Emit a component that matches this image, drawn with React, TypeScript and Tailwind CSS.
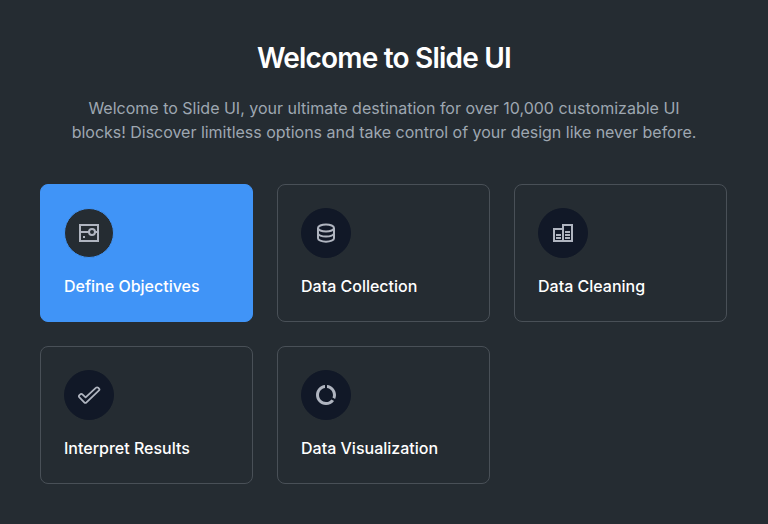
import type { ReactNode } from "react";

type Step = { title: string; icon: ReactNode; active?: boolean };

const steps: Step[] = [
  {
    title: "Define Objectives",
    active: true,
    icon: (
      <>
        <rect x="3" y="4" width="18" height="16" />
        <path d="M3 11h9M18 11h3" />
        <circle cx="15" cy="11" r="3" />
        <path d="M6 16h2" />
      </>
    ),
  },
  {
    title: "Data Collection",
    icon: (
      <>
        <ellipse cx="12" cy="7" rx="8" ry="3.5" />
        <path d="M4 7v5.2c0 1.9 3.6 3.4 8 3.4s8-1.5 8-3.4V7M4 12v5.2c0 2 3.6 3.5 8 3.5s8-1.5 8-3.5V12" />
      </>
    ),
  },
  {
    title: "Data Cleaning",
    icon: (
      <>
        <path d="M3 8h9V20H3zM12 20V4h9v16h-9" />
        <path d="M5 14h5M5 17h5M14 11h5M14 14h5M14 17h5" />
      </>
    ),
  },
  {
    title: "Interpret Results",
    icon: (
      <path
        d="M8.6 14.3 5.4 11.4a1.5 1.5 0 0 0-2.2 0l-1 1a1.2 1.2 0 0 0 0 1.7l5.3 5.5a1.2 1.2 0 0 0 1.7 0L22 7.4a1.3 1.3 0 0 0 0-1.8l-.9-.9a1.4 1.4 0 0 0-2 0Z"
        strokeWidth="1.8"
        strokeLinejoin="round"
      />
    ),
  },
  {
    title: "Data Visualization",
    icon: (
      <path
        fill="currentColor"
        stroke="none"
        d="M13 2.05v3.03c3.39.49 6 3.39 6 6.92 0 .9-.18 1.75-.48 2.54l2.6 1.53c.56-1.24.88-2.62.88-4.07 0-5.18-3.95-9.45-9-9.95zM12 19c-3.87 0-7-3.13-7-7 0-3.53 2.61-6.43 6-6.92V2.05c-5.06.5-9 4.76-9 9.95 0 5.52 4.47 10 9.99 10 3.31 0 6.24-1.61 8.06-4.09l-2.6-1.53C16.17 17.98 14.21 19 12 19z"
      />
    ),
  },
];

function StepCard({ title, icon, active }: Step) {
  return (
    <div
      className={`h-[138px] rounded-lg border px-[23px] pt-[23px] ${
        active ? "border-[#4094f7] bg-[#4094f7]" : "border-[#495057]"
      }`}
    >
      <div
        className={`flex size-[50px] items-center justify-center rounded-full border text-[#b0b5c0] ${
          active ? "border-[#4094f7] bg-[#252c32]" : "border-[#111827] bg-[#111827]"
        }`}
      >
        <svg viewBox="0 0 24 24" className="size-6" fill="none" stroke="currentColor" strokeWidth="2">
          {icon}
        </svg>
      </div>
      <h3 className="mt-4 text-base leading-6 font-medium text-white">{title}</h3>
    </div>
  );
}

export default function App() {
  return (
    <main className="h-[524px] bg-[#252c32] px-10 pt-10 font-['Inter',sans-serif]">
      <h1 className="text-center text-[28px] leading-9 font-semibold tracking-[-0.8px] text-white">
        Welcome to Slide UI
      </h1>
      <p className="mt-5 text-center text-base leading-6 text-[#9ea7b1]">
        Welcome to Slide UI, your ultimate destination for over 10,000 customizable UI
        <br />
        <span className="tracking-[-0.02px]">
          blocks! Discover limitless options and take control of your design like never before.
        </span>
      </p>
      <section className="mt-10 grid w-[687px] grid-cols-3 gap-6">
        {steps.map((step) => (
          <StepCard key={step.title} {...step} />
        ))}
      </section>
    </main>
  );
}
